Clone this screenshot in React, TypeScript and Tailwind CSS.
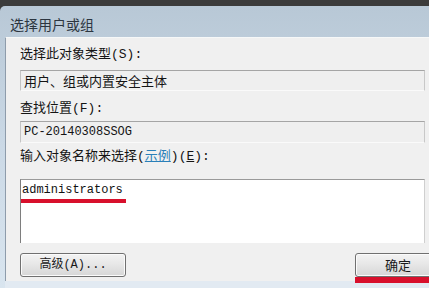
import React from "react";

const cjk = { fontFamily: '"Liberation Mono", "Noto Sans CJK SC", monospace' };
const cjkSans = { fontFamily: '"Noto Sans CJK SC", "Liberation Sans", sans-serif' };

export default function App() {
  return (
    <div className="relative w-[429px] h-[288px] overflow-hidden bg-[#3a3a3a] flex flex-col">
      {/* background window strip */}
      <div className="h-[6px] shrink-0 bg-[#3b3b3b]" />
      {/* dialog frame */}
      <div className="flex-1 flex flex-col rounded-tl-[5px] bg-gradient-to-b from-[#b8c8d6] via-[#cbd9e6] to-[#d9e5ef]">
        <div className="h-[31px] shrink-0 flex items-center pl-[10px] pt-[6px] text-[14px] text-[#2c3540]" style={cjkSans}>
          选择用户或组
        </div>
        <div className="ml-[5px] w-[440px] border-l border-l-[#8e9cab] border-t border-t-[#f6f8f8] bg-[#f0f0f0] flex flex-col pl-[14px] pt-[8px] pb-[4px] text-[13px] text-[#141414]">
          <div className="h-[17px] leading-[17px]" style={cjk}>
            选择此对象类型(S):
          </div>
          <div className="mt-[7px] w-[405px] h-[21px] border-t border-l border-t-[#a5a5a5] border-l-[#c4c4c4] border-r border-b border-r-[#c8c8c8] border-b-[#fafafa] bg-[#efefef] flex items-center pl-[3px]" style={cjkSans}>
            用户、组或内置安全主体
          </div>
          <div className="mt-[9px] h-[17px] leading-[17px]" style={cjk}>
            查找位置(F):
          </div>
          <div className="mt-[4px] w-[405px] h-[22px] border-t border-l border-t-[#a5a5a5] border-l-[#c4c4c4] border-r border-b border-r-[#c8c8c8] border-b-[#fafafa] bg-[#efefef] flex items-center pl-[3px] text-[12px]" style={cjk}>
            PC-20140308SSOG
          </div>
          <div className="mt-[5px] h-[17px] leading-[17px]" style={cjk}>
            输入对象名称来选择(<span className="text-[#2a7fb8] underline">示例</span>)(<span className="underline">E</span>):
          </div>
          <div className="relative mt-[14px] w-[405px] h-[64px] bg-white border-t border-l border-t-[#9a9a9a] border-l-[#7e7e7e] border-r border-r-[#cfcfcf] pl-[1px] pt-[3px] text-[12px] leading-[14px] text-[#111]" style={cjk}>
            administrators
            <div className="absolute left-0 top-[19px] w-[105px] h-[4px] bg-[#d8102c]" />
          </div>
          <div className="mt-[10px] flex items-start">
            <div className="w-[106px] h-[24px] rounded-[3px] border border-[#707070] bg-gradient-to-b from-[#f3f3f3] via-[#e6e6e6] to-[#d6d6d6] flex items-center justify-center text-[12px] text-[#1a1a1a] shadow-[inset_0_0_0_1px_#fbfbfb]" style={cjk}>
              高级(A)...
            </div>
            <div className="ml-[229px] relative">
              <div className="w-[86px] h-[24px] rounded-[3px] border border-[#707070] bg-gradient-to-b from-[#f3f3f3] via-[#e6e6e6] to-[#d6d6d6] flex items-center justify-center text-[13px] text-[#1a1a1a] shadow-[inset_0_0_0_1px_#fbfbfb]" style={cjkSans}>
                确定
              </div>
              <div className="absolute left-0 top-[24px] w-[80px] h-[6px] bg-[#d8102c]" />
            </div>
          </div>
        </div>
        <div className="flex-1 ml-[5px] bg-[#e2eaf2]" />
      </div>
    </div>
  );
}
